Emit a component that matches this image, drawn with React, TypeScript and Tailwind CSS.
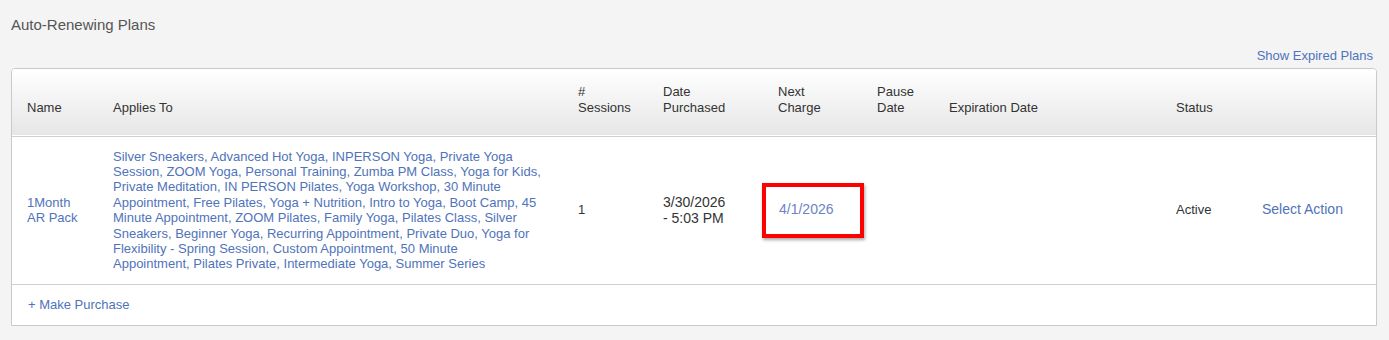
import React from 'react';

// line breaks kept as they fall in the original layout
const appliesTo = [
  'Silver Sneakers, Advanced Hot Yoga, INPERSON Yoga, Private Yoga',
  'Session, ZOOM Yoga, Personal Training, Zumba PM Class, Yoga for Kids,',
  'Private Meditation, IN PERSON Pilates, Yoga Workshop, 30 Minute',
  'Appointment, Free Pilates, Yoga + Nutrition, Intro to Yoga, Boot Camp, 45',
  'Minute Appointment, ZOOM Pilates, Family Yoga, Pilates Class, Silver',
  'Sneakers, Beginner Yoga, Recurring Appointment, Private Duo, Yoga for',
  'Flexibility - Spring Session, Custom Appointment, 50 Minute',
  'Appointment, Pilates Private, Intermediate Yoga, Summer Series',
];

const font = { fontFamily: '"Liberation Sans", Arial, sans-serif' };

export default function App() {
  return (
    <div className="min-h-[340px] w-full bg-[#f4f4f4] text-[#333]" style={font}>
      <div className="pl-[11px] pr-[12px] pt-[15px]">
        <h2 className="text-[15px] leading-[20px] font-normal text-[#555]">Auto-Renewing Plans</h2>

        <div className="mt-[13px] flex justify-end pr-[4px]">
          <a className="text-[13px] leading-[16px] text-[#4f73bb] cursor-pointer">Show Expired Plans</a>
        </div>

        <div className="mt-[4px] overflow-hidden rounded-t-[4px] border border-[#c9c9c9] bg-white">
          <table className="w-full table-fixed border-collapse text-[13px]">
            <colgroup>
              <col className="w-[86px]" />
              <col className="w-[465px]" />
              <col className="w-[85px]" />
              <col className="w-[115px]" />
              <col className="w-[99px]" />
              <col className="w-[72px]" />
              <col className="w-[227px]" />
              <col className="w-[86px]" />
              <col />
            </colgroup>
            <thead>
              <tr className="h-[67px] border-b border-[#cfcfcf] bg-gradient-to-b from-white to-[#e6e6e6] text-left align-bottom leading-[16px]">
                <th className="pb-[20px] pl-[15px] font-normal">Name</th>
                <th className="pb-[20px] pl-[15px] font-normal">Applies To</th>
                <th className="pb-[20px] pl-[15px] font-normal">#<br />Sessions</th>
                <th className="pb-[20px] pl-[15px] font-normal">Date<br />Purchased</th>
                <th className="pb-[20px] pl-[15px] font-normal">Next<br />Charge</th>
                <th className="pb-[20px] pl-[15px] font-normal">Pause<br />Date</th>
                <th className="pb-[20px] pl-[15px] font-normal">Expiration Date</th>
                <th className="pb-[20px] pl-[15px] font-normal">Status</th>
                <th className="pb-[20px] pl-[15px] font-normal"></th>
              </tr>
            </thead>
            <tbody>
              <tr className="border-b border-[#cfcfcf] align-middle leading-[15.4px]">
                <td className="py-[12px] pl-[15px] pr-[8px] text-[#4f73bb]">1Month AR Pack</td>
                <td className="whitespace-nowrap py-[12px] pl-[15px] text-[#4f73bb]">
                  {appliesTo.map((line, i) => (
                    <div key={i}>{line}</div>
                  ))}
                </td>
                <td className="pl-[15px]">1</td>
                <td className="pl-[15px] text-[14px] leading-[16px]">
                  3/30/2026
                  <br />- 5:03 PM
                </td>
                <td>
                  <div className="-ml-[1px] -mr-[2px] flex h-[55px] items-center border-4 border-[#f00] pl-[13px] text-[14px] text-[#6b84c2] shadow-[1px_2px_3px_rgba(0,0,0,0.35)]">
                    4/1/2026
                  </div>
                </td>
                <td className="pl-[15px]"></td>
                <td className="pl-[15px]"></td>
                <td className="pl-[15px]">Active</td>
                <td className="pl-[15px] text-[14px] text-[#4f73bb]">Select Action</td>
              </tr>
            </tbody>
          </table>
          <div className="flex h-[40px] items-center pl-[16px] text-[13px] text-[#4f73bb]">+ Make Purchase</div>
        </div>
      </div>
    </div>
  );
}
